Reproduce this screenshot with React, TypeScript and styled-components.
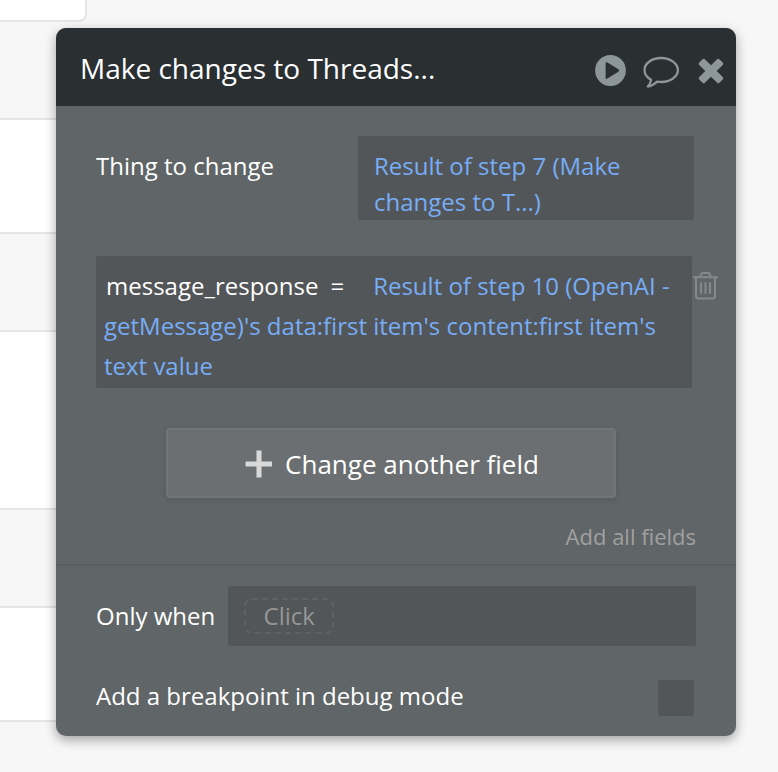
import React from "react";
import styled, { createGlobalStyle } from "styled-components";

const color = {
  canvas: "#f7f7f7",
  cardBorder: "#e5e5e5",
  header: "#2a2f32",
  body: "#606567",
  field: "#535658",
  link: "#77adf6",
  icon: "#8d9698",
  muted: "#a0a0a0",
};

const GlobalStyle = createGlobalStyle`
  *, *::before, *::after { box-sizing: border-box; }
  body {
    margin: 0;
    background: ${color.canvas};
    color: #fff;
    font-family: "Open Sans", "Noto Sans", sans-serif;
    font-size: 24px;
    line-height: 36px;
  }
  button, input { font: inherit; color: inherit; margin: 0; }
`;

const Stage = styled.main`
  display: grid;
  grid-template-columns: minmax(0, 1fr);
  align-items: start;
  min-height: 100vh;
`;

const Backdrop = styled.div`
  grid-area: 1 / 1;
  display: flex;
  flex-direction: column;
  gap: 96px;
`;

const CanvasCard = styled.div<{ $height: number; $first?: boolean }>`
  width: ${(p) => (p.$first ? "87px" : "50%")};
  height: ${(p) => p.$height}px;
  background: #fff;
  border: 2px solid ${color.cardBorder};
  border-left: 0;
  border-top-width: ${(p) => (p.$first ? 0 : 2)}px;
  border-radius: 0 ${(p) => (p.$first ? 0 : 8)}px 8px 0;
`;

const Dialog = styled.section`
  grid-area: 1 / 1;
  margin: 28px 42px 36px 56px;
  background: ${color.body};
  border-radius: 10px;
  box-shadow: 0 4px 12px rgba(0, 0, 0, 0.35);
`;

const Header = styled.header`
  display: flex;
  align-items: center;
  justify-content: space-between;
  height: 78px;
  padding: 2px 12px 0 24px;
  background: ${color.header};
  border-radius: 10px 10px 0 0;
`;

const Title = styled.h1`
  margin: 0;
  font-size: 28px;
  line-height: 40px;
  font-weight: 400;
`;

const Actions = styled.div`
  display: flex;
  align-items: center;
  gap: 16px;
  padding-top: 6px;
`;

const IconButton = styled.button`
  display: flex;
  padding: 0;
  border: 0;
  background: none;
  color: ${color.icon};
  cursor: pointer;
`;

const Section = styled.div`
  display: flex;
  flex-direction: column;
  padding: 30px 40px 10px;
`;

const ThingRow = styled.div`
  display: flex;
  justify-content: space-between;
  align-items: flex-start;
  padding-right: 2px;
`;

const Label = styled.label`
  padding: 12px 0;
`;

const ValueBox = styled.button`
  width: 57%;
  max-width: 336px;
  height: 84px;
  padding: 12px 16px 0;
  border: 0;
  border-radius: 2px;
  background: ${color.field};
  color: ${color.link};
  text-align: left;
  cursor: pointer;
`;

const FieldRow = styled.div`
  display: flex;
  align-items: flex-start;
  margin: 36px -22px 0 0;
`;

const FieldBox = styled.div`
  flex: 1;
  padding: 10px 8px 2px;
  border-radius: 2px;
  background: ${color.field};
  line-height: 40px;
`;

const FieldName = styled.span`
  margin: 0 12px 0 2px;
`;

const Equals = styled.span`
  margin-right: 29px;
`;

const Expression = styled.a`
  color: ${color.link};
  text-decoration: none;
`;

const TrashButton = styled(IconButton)`
  margin-top: 15px;
  color: #85898a;
`;

const AddFieldButton = styled.button`
  display: flex;
  align-items: center;
  justify-content: center;
  gap: 13px;
  height: 70px;
  margin: 40px 80px 0 70px;
  padding: 2px 0 0 2px;
  border: 2px solid #717577;
  border-radius: 4px;
  background: #6b6f71;
  box-shadow: 0 2px 6px rgba(0, 0, 0, 0.12);
  font-size: 26px;
  cursor: pointer;
`;

const AddAll = styled.a`
  align-self: flex-end;
  margin-top: 20px;
  color: ${color.muted};
  font-size: 22px;
  text-decoration: none;
`;

const ConditionSection = styled(Section)`
  gap: 32px;
  padding: 20px 40px;
  border-top: 2px solid #595e60;
`;

const ConditionRow = styled.div`
  display: flex;
  align-items: center;
  gap: 13px;
`;

const ConditionBox = styled.div`
  flex: 1;
  height: 60px;
  padding: 12px 16px;
  border-radius: 2px;
  background: ${color.field};
`;

const ClickChip = styled.button`
  display: block;
  width: 90px;
  height: 36px;
  padding: 0;
  border: 2px dashed #5e6264;
  border-radius: 8px;
  background: none;
  color: #969696;
  line-height: 32px;
  cursor: pointer;
`;

const BreakpointRow = styled.div`
  display: flex;
  align-items: flex-start;
  justify-content: space-between;
  padding-right: 2px;
`;

const Checkbox = styled.input`
  && { margin-top: 2px; }
  appearance: none;
  width: 36px;
  height: 36px;
  border-radius: 2px;
  background: ${color.field};
  &:checked { background: ${color.link}; }
`;

const PlayIcon = () => (
  <svg width="32" height="32" viewBox="0 0 32 32" aria-hidden="true">
    <path
      fill="currentColor"
      fillRule="evenodd"
      d="M16.500 .1a15.400 15.400 0 1 0 0 30.800A15.400 15.400 0 0 0 16.500 .1ZM13.400 7.500 24.400 14.200q1.700 1.300 0 2.600L13.400 23.600Q11.600 24.600 11.600 22.700V8.500q0-2 1.800-1Z"
    />
  </svg>
);

const CommentIcon = () => (
  <svg width="40" height="34" viewBox="0 0 40 34" aria-hidden="true">
    <path
      fill="none"
      stroke="currentColor"
      strokeWidth="2.300"
      strokeLinejoin="round"
      d="M19.200 4C9.900 4 2.500 9.300 2.500 16.100c0 4 2.500 7.500 6.600 9.700-.1 2.600-1.400 4.500-3.300 6.700 4.200-.8 7.400-2.900 9.400-4.900 1.300.3 2.600.4 4 .4 9.300 0 16.700-5.300 16.700-11.900S28.500 4 19.200 4Z"
    />
  </svg>
);

const CloseIcon = () => (
  <svg width="26" height="26" viewBox="0 0 26 26" aria-hidden="true">
    <path
      fill="currentColor"
      d="M1.200 6.900q-1-1.200 0-2.300l3.400-3.400q1.100-1 2.300 0L13 7.300l6.100-6.100q1.200-1 2.300 0l3.400 3.400q1 1.100 0 2.300L18.700 13l6.100 6.100q1 1.200 0 2.300l-3.400 3.400q-1.100 1-2.300 0L13 18.700l-6.100 6.100q-1.200 1-2.300 0l-3.400-3.400q-1-1.100 0-2.300L7.300 13Z"
    />
  </svg>
);

const TrashIcon = () => (
  <svg width="26" height="30" viewBox="0 0 26 30" fill="none" stroke="currentColor" aria-hidden="true">
    <path strokeWidth="2" d="M1 6.300H26M8 6 9.300 3Q10 2 11.200 2h4.600q1.200 0 1.900 1L19 6" />
    <path strokeWidth="2" d="M4 7v18q0 2.500 2.500 2.500h14Q23 27.500 23 25V7" />
    <path strokeWidth="2" strokeLinecap="round" d="M9 12v10M13.500 12v10M18 12v10" />
  </svg>
);

const PlusIcon = () => (
  <svg width="27" height="28" viewBox="0 0 27 28" aria-hidden="true">
    <path fill="#d9d9d9" d="M11.500 .5h5v11H27v5H16.500v11h-5v-11H.500v-5h11Z" />
  </svg>
);

export default function App() {
  return (
    <>
      <GlobalStyle />
      <Stage>
        <Backdrop>
          <CanvasCard $height={22} $first />
          <CanvasCard $height={116} />
          <CanvasCard $height={180} />
          <CanvasCard $height={116} />
        </Backdrop>
        <Dialog aria-labelledby="dialog-title">
          <Header>
            <Title id="dialog-title">Make changes to Threads...</Title>
            <Actions>
              <IconButton aria-label="Run"><PlayIcon /></IconButton>
              <IconButton aria-label="Comment"><CommentIcon /></IconButton>
              <IconButton aria-label="Close"><CloseIcon /></IconButton>
            </Actions>
          </Header>
          <Section>
            <ThingRow>
              <Label htmlFor="thing">Thing to change</Label>
              <ValueBox id="thing">Result of step 7 (Make changes to T...)</ValueBox>
            </ThingRow>
            <FieldRow>
              <FieldBox>
                <FieldName>message_response</FieldName>
                <Equals>=</Equals>
                <Expression href="#value">
                  Result of step 10 (OpenAI - getMessage)'s data:first item's content:first item's text value
                </Expression>
              </FieldBox>
              <TrashButton aria-label="Delete field"><TrashIcon /></TrashButton>
            </FieldRow>
            <AddFieldButton>
              <PlusIcon />
              Change another field
            </AddFieldButton>
            <AddAll href="#all-fields">Add all fields</AddAll>
          </Section>
          <ConditionSection>
            <ConditionRow>
              <Label htmlFor="condition">Only when</Label>
              <ConditionBox>
                <ClickChip id="condition">Click</ClickChip>
              </ConditionBox>
            </ConditionRow>
            <BreakpointRow>
              <label htmlFor="breakpoint">Add a breakpoint in debug mode</label>
              <Checkbox id="breakpoint" type="checkbox" />
            </BreakpointRow>
          </ConditionSection>
        </Dialog>
      </Stage>
    </>
  );
}
